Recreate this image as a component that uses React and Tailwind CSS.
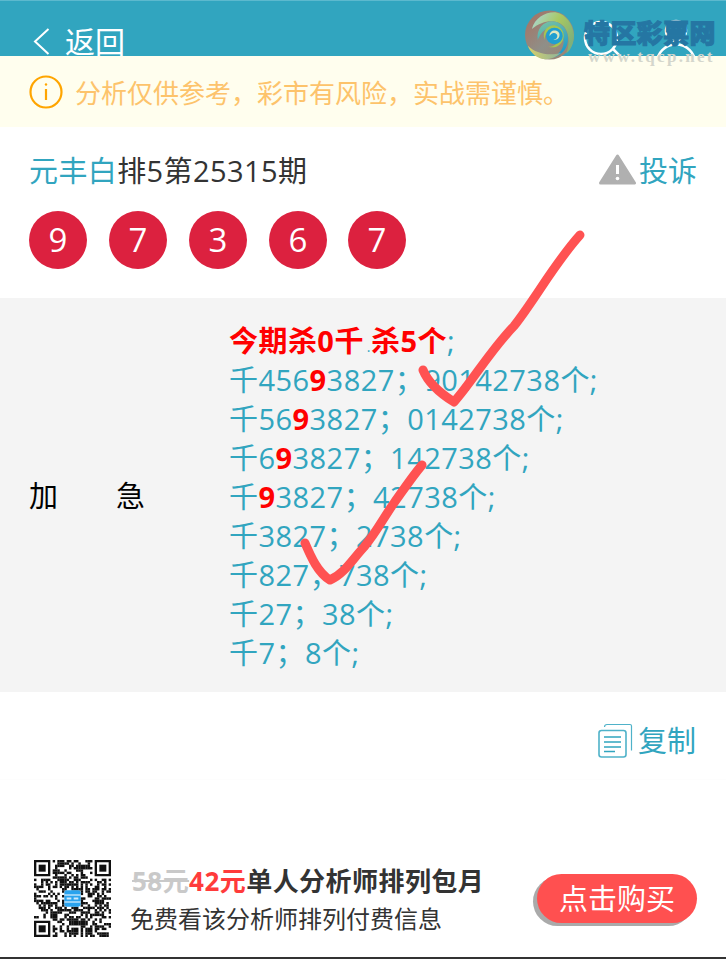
const FONT = { fontFamily: '"Open Sans", "Noto Sans CJK SC", sans-serif' };

const balls = ["9", "7", "3", "6", "7"];

const rows = [
  ["千456", "9", "3827；90142738个;"],
  ["千56", "9", "3827；0142738个;"],
  ["千6", "9", "3827；142738个;"],
  ["千", "9", "3827；42738个;"],
  ["千3827；2738个;"],
  ["千827；738个;"],
  ["千27；38个;"],
  ["千7；8个;"],
];

function Finder({ x, y }) {
  return (
    <g fill="#111">
      <path fillRule="evenodd" d={`M${x} ${y}h7v7h-7zM${x + 1} ${y + 1}v5h5v-5z`} />
      <rect x={x + 2} y={y + 2} width="3" height="3" />
    </g>
  );
}

// rough data modules, only the overall texture of the code matters here
function QrCode() {
  const cells = [];
  let seed = 7919;
  for (let y = 0; y < 33; y++) {
    for (let x = 0; x < 33; x++) {
      seed = (seed * 1103515245 + 12345) & 0x7fffffff;
      const inFinder = (x < 8 && y < 8) || (x > 24 && y < 8) || (x < 8 && y > 24);
      const inLogo = x > 12 && x < 20 && y > 12 && y < 20;
      if (!inFinder && !inLogo && (seed >> 16) % 100 < 50) cells.push(<rect key={`${x}-${y}`} x={x} y={y} width="1.05" height="1.05" fill="#111" />);
    }
  }
  return (
    <svg viewBox="0 0 33 33" className="h-[77px] w-[77px] shrink-0">
      {cells}
      <Finder x={0} y={0} />
      <Finder x={26} y={0} />
      <Finder x={0} y={26} />
      <rect x="13" y="13" width="7" height="7" rx="1" fill="#2aa3ee" />
      <path d="M13 15h7M13 18h7" stroke="#fff" strokeWidth="0.5" />
      <path d="M14 16.5h2M17 16.5h2" stroke="#cfeafc" strokeWidth="0.8" />
    </svg>
  );
}

function SwirlLogo() {
  return (
    <svg viewBox="0 0 50 52" className="h-[52px] w-[49px] shrink-0">
      <defs>
        <linearGradient id="base" x1="0" y1="0" x2="1" y2="1">
          <stop offset="0" stopColor="#a8705f" />
          <stop offset="0.55" stopColor="#8f8f88" />
          <stop offset="1" stopColor="#a0806a" />
        </linearGradient>
        <linearGradient id="crest" x1="0" y1="0" x2="1" y2="0.6">
          <stop offset="0" stopColor="#a9d8e2" />
          <stop offset="0.55" stopColor="#a9c860" />
          <stop offset="1" stopColor="#7fb07a" />
        </linearGradient>
        <linearGradient id="wave" x1="0" y1="0" x2="0.4" y2="1">
          <stop offset="0" stopColor="#7fc3a0" />
          <stop offset="1" stopColor="#1f9ccb" />
        </linearGradient>
        <linearGradient id="foot" x1="0" y1="0" x2="1" y2="0">
          <stop offset="0" stopColor="#d6cf6a" />
          <stop offset="1" stopColor="#8fb39a" />
        </linearGradient>
      </defs>
      <circle cx="25" cy="26" r="25" fill="url(#base)" />
      <path d="M7 20C10 8 22 2 32 3c10 2 17 12 18 23 0 8-3 15-8 19 3-8 4-18-1-26C35 10 20 9 7 20z" fill="url(#crest)" />
      <path d="M13 31C11 18 22 9 33 13c9 4 13 14 10 23-2 7-9 13-17 13 10-3 15-11 13-20-2-8-10-13-17-9-6 3-7 8-9 11z" fill="url(#wave)" />
      <path d="M3 37c8 8 22 11 34 7-6 5-13 8-21 6C10 48 5 43 3 37z" fill="url(#foot)" />
      <path d="M20 31c-3-9 3-15 10-15 7 1 11 8 9 14-2 7-9 10-15 8 6 0 11-4 11-9 0-5-4-9-8-8-4 0-7 5-7 10z" fill="#a6c552" />
      <circle cx="30" cy="27" r="8.5" fill="#219fd0" />
      <path d="M25 27c0-4 3-6 6-5.500 3 .5 5 3 4 6-1 3-4 4-6 3 2 0 4-1 4-3.500 0-2-2-3.500-4-3-2 .5-3 2-4 3z" fill="#dfe8c0" />
    </svg>
  );
}

function CopyIcon() {
  return (
    <svg viewBox="0 0 35 35" className="h-[35px] w-[35px]" fill="none" stroke="#4fb2c9">
      <path d="M6.500 4c0-1.500 1-2.500 2.500-2.500h23c1 0 1.500 .5 1.500 1.500v24.500" strokeWidth="1.200" />
      <rect x="1" y="7.500" width="27" height="26.500" rx="2.500" strokeWidth="1.600" />
      <path d="M6 14h17M6 19h17M6 24h17M6 28.500h11" stroke="#31a5bf" strokeWidth="1.600" />
    </svg>
  );
}

export default function App() {
  return (
    <div className="relative flex h-[959px] w-[726px] flex-col overflow-hidden bg-white" style={FONT}>
      <header className="relative flex h-14 shrink-0 items-start overflow-hidden border-t border-[#5cb9ce] bg-[#31a5bf] pl-[33px] pt-[25px] text-white">
        <svg viewBox="0 0 17 27" className="mt-[2px] h-[27px] w-[17px]" fill="none" stroke="#fff" strokeWidth="2">
          <path d="M15.500 1L2 13.500 15.500 26" />
        </svg>
        <span className="ml-[15px] text-[30px] leading-[32px]">返回</span>
        <svg viewBox="0 0 150 55" className="ml-auto mt-[-25px] h-[55px] w-[150px]" fill="none" stroke="#fff" strokeWidth="2.500">
          <circle cx="25" cy="37" r="16" />
          <path d="M37 48l9 9" />
          <circle cx="100" cy="30" r="10" />
          <path d="M80 66c0-30 40-30 40 0" />
        </svg>
      </header>

      <div className="flex h-[71px] shrink-0 items-center bg-[#fffeee] pl-[29px]">
        <svg viewBox="0 0 34 34" className="h-[34px] w-[34px] shrink-0" fill="none" stroke="#ffa500" strokeWidth="2.200">
          <circle cx="17" cy="17" r="15.500" />
          <path d="M17 14v11" />
          <circle cx="17" cy="9.500" r="1.200" fill="#ffa500" stroke="none" />
        </svg>
        <p className="ml-[12px] pt-[2px] text-[26px] leading-none text-[#fdc36b]">分析仅供参考，彩市有风险，实战需谨慎。</p>
      </div>

      <section className="flex h-[171px] shrink-0 flex-col px-[29px]">
        <div className="flex h-[84px] items-center justify-between pt-[2px]">
          <p className="text-[29px] leading-none tracking-[0.4px] text-[#333]">
            <span className="text-[#31a5bf]">元丰白</span>排5第25315期
          </p>
          <div className="flex items-center gap-[3px]">
            <svg viewBox="0 0 37 31" className="mb-[2px] h-[31px] w-[37px]">
              <path d="M18.500 2L35.500 29H1.500z" fill="#b0b0b0" stroke="#b0b0b0" strokeWidth="3" strokeLinejoin="round" />
              <path d="M18.500 11v9" stroke="#fff" strokeWidth="3" />
              <circle cx="18.500" cy="24.500" r="1.800" fill="#fff" />
            </svg>
            <span className="text-[29px] leading-none text-[#31a5bf]">投诉</span>
          </div>
        </div>
        <div className="flex gap-[22px]">
          {balls.slice(0, 4).map((ball, i) => (
            <span key={i} className="grid h-[58px] w-[58px] place-items-center rounded-full bg-[#dc213f] pb-[1px] text-[33px] leading-none text-white">
              {ball}
            </span>
          ))}
          <span className="-ml-[1px] grid h-[58px] w-[58px] place-items-center rounded-full bg-[#dc213f] pb-[1px] text-[33px] leading-none text-white">{balls[4]}</span>
        </div>
      </section>

      <section className="flex h-[394px] shrink-0 items-center bg-[#f4f4f4]">
        <div className="flex w-[229px] shrink-0 pl-[29px] text-[29px] leading-none text-black">
          <div className="flex w-[116px] justify-between">
            <span>加</span>
            <span>急</span>
          </div>
        </div>
        <div className="whitespace-nowrap pt-[2px] text-[29px] leading-[39px] tracking-[0.45px] text-[#31a5bf]">
          <div>
            <b className="text-[#ff0000]">今期杀0千</b>
            <span className="ml-[3px] text-[14px] leading-[0]">.</span>
            <b className="text-[#ff0000]">杀5个</b>;
          </div>
          {rows.map((row, i) => (
            <div key={i}>
              {row[0]}
              {row[1] ? <b className="text-[#ff0000]">{row[1]}</b> : null}
              {row[2]}
            </div>
          ))}
        </div>
      </section>

      <div className="flex h-[88px] shrink-0 items-center justify-end gap-[5px] border-b border-[#fdfdfd] pr-[30px] pt-[10px]">
        <CopyIcon />
        <span className="text-[29px] leading-none text-[#31a5bf]">复制</span>
      </div>

      <div className="flex min-h-0 flex-1 items-end border-b-2 border-[#333] pb-5 pl-[34px] pr-[29px]">
        <QrCode />
        <div className="ml-[19px] min-w-0 flex-1 pb-[1px]">
          <p className="whitespace-nowrap pl-[2px] text-[26px] font-bold leading-[38px] tracking-[0.45px] text-[#333]">
            <span className="text-[#c9c9c9] line-through">58元</span>
            <span className="text-[#ff3b3b]">42元</span>单人分析师排列包月
          </p>
          <p className="mt-[2px] whitespace-nowrap text-[24px] leading-[34px] text-[#333]">免费看该分析师排列付费信息</p>
        </div>
        <button className="mb-[14px] grid h-[49px] w-[160px] shrink-0 place-items-center rounded-full bg-[#ff5050] text-[29px] leading-none text-white shadow-[-4px_3px_0_#aaa]">点击购买</button>
      </div>

      {/* watermark sits over the header and the notice bar */}
      <div className="pointer-events-none absolute left-[525px] top-[9px] flex">
        <SwirlLogo />
        <div className="ml-[10px] mt-[8px] flex flex-col">
          <span className="text-[26px] font-black leading-[32px] tracking-[0.4px] text-[#2576a3] [-webkit-text-stroke:1px_#2576a3]">特区彩票网</span>
          <span className="ml-[4px] text-[17px] font-bold leading-[16px] tracking-[2.3px] text-[#d4d6cc]" style={{ fontFamily: '"Liberation Serif", serif' }}>www.tqcp.net</span>
        </div>
      </div>

      {/* hand drawn ticks on top of the numbers */}
      <svg className="pointer-events-none absolute left-0 top-0 h-[959px] w-[726px]" viewBox="0 0 726 959" fill="none" stroke="#ff5252" strokeWidth="9" strokeLinecap="round" strokeLinejoin="round">
        <path d="M423 370c4 10 15 22 31 32 18-20 35-50 60-76 22-28 40-62 66-91" />
        <path d="M305 543c6 14 13 30 25 37 14-6 22-20 34-33 12-14 20-30 30-44 10-14 18-26 28-38" />
      </svg>
    </div>
  );
}
